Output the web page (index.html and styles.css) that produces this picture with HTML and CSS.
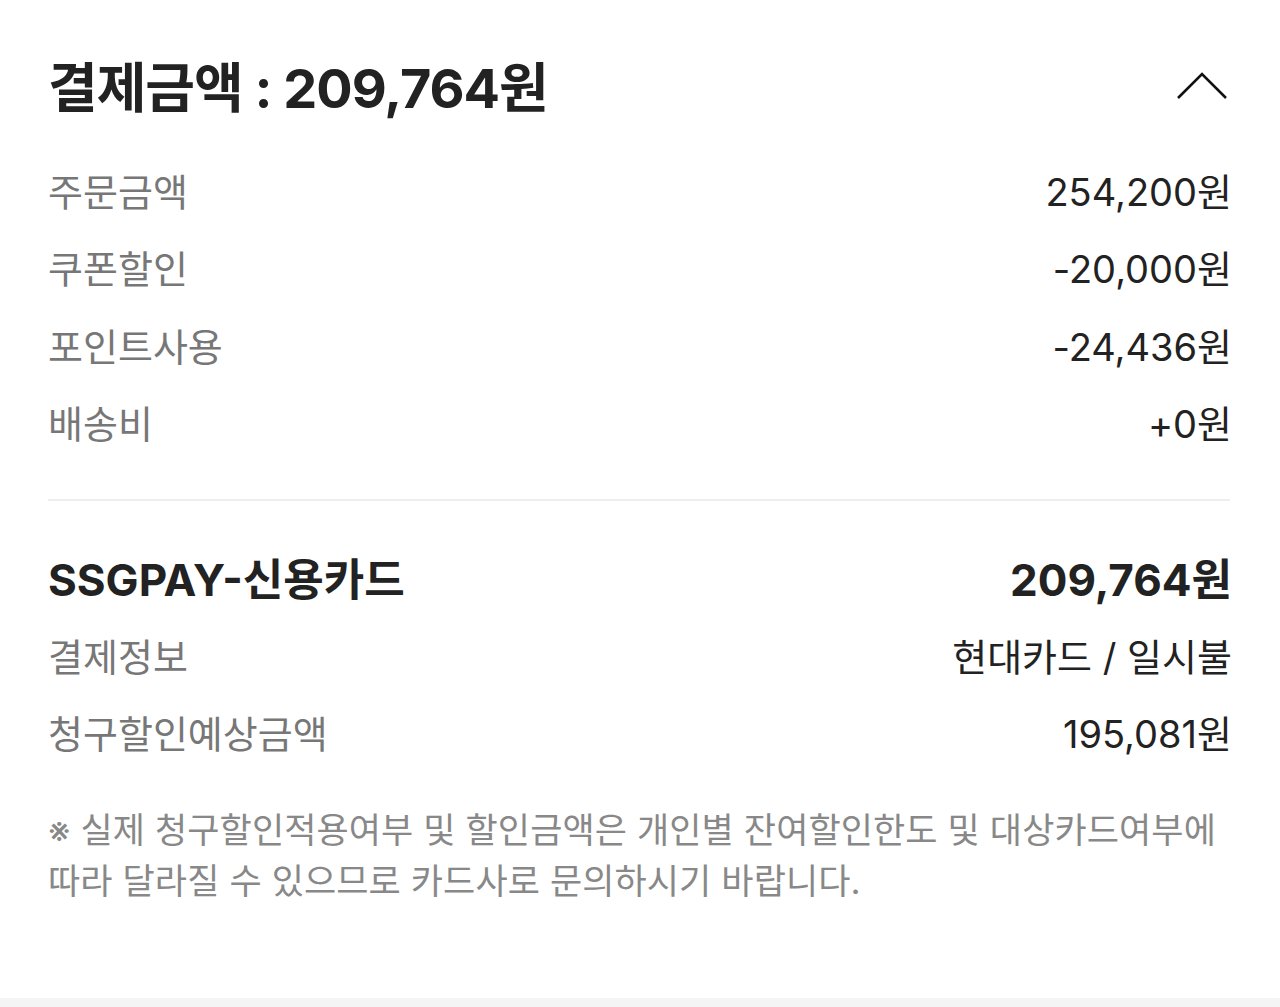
FILE: index.html
```html
<!DOCTYPE html>
<html lang="ko">
<head>
    <meta charset="UTF-8">
    <meta name="viewport" content="width=device-width, initial-scale=1.0">
    <title>결제금액</title>
    <link rel="stylesheet" href="styles.css">
</head>
<body>
    <div id="payment">
        <div class="pay-header">
            <h2 class="pay-title">결제금액 : 209,764원</h2>
            <button class="toggle" aria-label="접기">
                <svg width="52" height="30" viewBox="0 0 52 30">
                    <polyline points="2,27 26,3 50,27" fill="none" stroke="#111" stroke-width="2.6"/>
                </svg>
            </button>
        </div>

        <div class="rows">
            <div class="row"><span class="label">주문금액</span><span class="value">254,200원</span></div>
            <div class="row"><span class="label">쿠폰할인</span><span class="value">-20,000원</span></div>
            <div class="row"><span class="label">포인트사용</span><span class="value">-24,436원</span></div>
            <div class="row"><span class="label">배송비</span><span class="value">+0원</span></div>
        </div>

        <hr class="divider">

        <div class="rows">
            <div class="row method"><span class="label">SSGPAY-신용카드</span><span class="value">209,764원</span></div>
            <div class="row"><span class="label">결제정보</span><span class="value">현대카드 / 일시불</span></div>
            <div class="row"><span class="label">청구할인예상금액</span><span class="value">195,081원</span></div>
        </div>

        <p class="notice">※ 실제 청구할인적용여부 및 할인금액은 개인별 잔여할인한도 및 대상카드여부에<br>따라 달라질 수 있으므로 카드사로 문의하시기 바랍니다.</p>
    </div>
    <div class="bottom-bar"></div>
</body>
</html>
```

FILE: styles.css
```css
body{
    margin:0;
    background:#fff;
    font-family: Inter, "Noto Sans CJK KR", sans-serif;
    color:#222;
}
#payment{
    height:998px;
    box-sizing:border-box;
    padding:50px 48px 0 48px;
}
.pay-header{
    display:flex;
    justify-content:space-between;
    align-items:center;
    height:68px;
}
.pay-title{
    margin:0;
    font-size:54px;
    font-weight:700;
    letter-spacing:-1px;
    color:#222;
}
.toggle{
    border:0;
    background:none;
    padding:0;
    margin:4px 4px 0 0;
    display:flex;
}
.rows{
    margin-top:33px;
}
.row{
    display:flex;
    justify-content:space-between;
    align-items:center;
    height:77.3px;
    font-size:38px;
}
.label{
    color:#777;
}
.value{
    color:#222;
}
.method .label,
.method .value{
    font-size:44px;
    font-weight:700;
    color:#222;
}
.divider{
    margin:39px 2px 0 0;
    border:0;
    height:2px;
    background:#eeeeee;
}
.rows + .divider + .rows{
    margin-top:37px;
}
.notice{
    margin:35px 0 0;
    font-size:35px;
    line-height:51px;
    letter-spacing:0.1px;
    color:#888;
}
.bottom-bar{
    height:9px;
    background:#f4f4f4;
}
```
